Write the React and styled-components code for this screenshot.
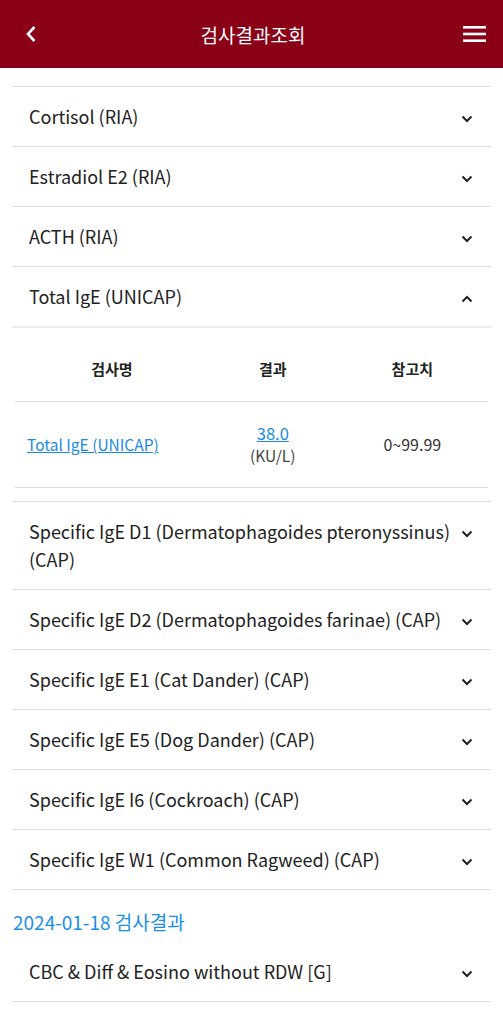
import React from "react";
import styled, { createGlobalStyle } from "styled-components";

const GlobalStyle = createGlobalStyle`
  * { box-sizing: border-box; }
  body {
    margin: 0;
    background: #fff;
    font-family: "Noto Sans CJK KR", "Noto Sans", sans-serif;
    color: #222;
  }
`;

const before = ["Cortisol (RIA)", "Estradiol E2 (RIA)", "ACTH (RIA)"];
const after = [
  "Specific IgE D1 (Dermatophagoides pteronyssinus) (CAP)",
  "Specific IgE D2 (Dermatophagoides farinae) (CAP)",
  "Specific IgE E1 (Cat Dander) (CAP)",
  "Specific IgE E5 (Dog Dander) (CAP)",
  "Specific IgE I6 (Cockroach) (CAP)",
  "Specific IgE W1 (Common Ragweed) (CAP)",
];

const Chevron = ({ up }) => (
  <svg width="14" height="14" viewBox="0 0 14 14">
    <path
      d={up ? "M2.5 9.5 L7 5 L11.5 9.5" : "M2.5 4.5 L7 9 L11.5 4.5"}
      fill="none"
      stroke="#222"
      strokeWidth="2"
    />
  </svg>
);

const App = () => (
  <>
    <GlobalStyle />
    <Header>
      <IconButton aria-label="back">
        <svg width="14" height="20" viewBox="0 0 14 20">
          <path d="M10.5 3 L4 10 L10.5 17" fill="none" stroke="#fff" strokeWidth="2.6" />
        </svg>
      </IconButton>
      <Title>검사결과조회</Title>
      <IconButton aria-label="menu">
        <svg width="23" height="18" viewBox="0 0 23 18">
          <rect x="0" y="1" width="23" height="2.6" fill="#fff" />
          <rect x="0" y="7.7" width="23" height="2.6" fill="#fff" />
          <rect x="0" y="14.4" width="23" height="2.6" fill="#fff" />
        </svg>
      </IconButton>
    </Header>
    <Content>
      <List>
        {before.map((t) => (
          <Item key={t}>
            <ItemText>{t}</ItemText>
            <Toggle><Chevron /></Toggle>
          </Item>
        ))}
        <Item open>
          <ItemText>Total IgE (UNICAP)</ItemText>
          <Toggle><Chevron up /></Toggle>
        </Item>
        <Panel>
          <Table>
            <colgroup>
              <col style={{ width: "41%" }} />
              <col style={{ width: "27%" }} />
              <col style={{ width: "32%" }} />
            </colgroup>
            <thead>
              <tr>
                <Th>검사명</Th>
                <Th>결과</Th>
                <Th>참고치</Th>
              </tr>
            </thead>
            <tbody>
              <tr>
                <Td align="left">
                  <LinkText href="#">Total IgE (UNICAP)</LinkText>
                </Td>
                <Td>
                  <LinkText href="#" big>38.0</LinkText>
                  <Unit>(KU/L)</Unit>
                </Td>
                <Td>0~99.99</Td>
              </tr>
            </tbody>
          </Table>
        </Panel>
        {after.map((t) => (
          <Item key={t}>
            <ItemText>{t}</ItemText>
            <Toggle><Chevron /></Toggle>
          </Item>
        ))}
      </List>
      <DateTitle>2024-01-18 검사결과</DateTitle>
      <List plain>
        <Item>
          <ItemText>CBC &amp; Diff &amp; Eosino without RDW [G]</ItemText>
          <Toggle><Chevron /></Toggle>
        </Item>
        <Item>
          <ItemText>ESR</ItemText>
          <Toggle><Chevron /></Toggle>
        </Item>
      </List>
    </Content>
  </>
);

const Header = styled.header`
  height: 68px;
  background: #8a0016;
  display: flex;
  align-items: center;
  justify-content: space-between;
  padding: 0 15px 0 18px;
`;

const IconButton = styled.button`
  border: 0;
  background: none;
  padding: 0;
  width: 26px;
  height: 26px;
  display: flex;
  align-items: center;
  justify-content: center;
`;

const Title = styled.h1`
  margin: 0;
  color: #fff;
  font-size: 19px;
  font-weight: 400;
`;

const Content = styled.main`
  padding: 18px 12px 0;
`;

const List = styled.ul`
  list-style: none;
  margin: 0;
  padding: 0;
  border-top: ${(p) => (p.plain ? "0" : "1px solid #dedede")};
`;

const Item = styled.li`
  display: flex;
  align-items: flex-start;
  justify-content: space-between;
  padding: 15px 17px 16px 17px;
  border-bottom: ${(p) => (p.open ? "2px solid #ececec" : "1px solid #dedede")};
`;

const ItemText = styled.span`
  font-size: 18px;
  line-height: 28px;
  padding-right: 8px;
`;

const Toggle = styled.span`
  flex: none;
  padding-top: 10px;
  display: flex;
`;

const Panel = styled.li`
  padding: 0 3px 13px;
  border-bottom: 1px solid #dedede;
`;

const Table = styled.table`
  width: 100%;
  border-collapse: collapse;
  table-layout: fixed;
`;

const Th = styled.th`
  height: 73px;
  padding-top: 10px;
  font-size: 15px;
  font-weight: 700;
  color: #222;
  border-bottom: 1px solid #dedede;
`;

const Td = styled.td`
  height: 86px;
  text-align: ${(p) => p.align || "center"};
  padding: 0 0 0 ${(p) => (p.align === "left" ? "12px" : "0")};
  font-size: 16px;
  color: #333;
  border-bottom: 1px solid #dedede;
  line-height: 22px;
`;

const LinkText = styled.a`
  display: ${(p) => (p.big ? "block" : "inline")};
  color: #1a8ae6;
  text-decoration: underline;
  font-size: ${(p) => (p.big ? "16.5px" : "15.5px")};
`;

const Unit = styled.div`
  color: #444;
  font-size: 15.5px;
`;

const DateTitle = styled.h2`
  margin: 0;
  padding: 20px 1px 8px;
  font-size: 19px;
  line-height: 24px;
  font-weight: 400;
  color: #1a8fe8;
`;

export default App;
